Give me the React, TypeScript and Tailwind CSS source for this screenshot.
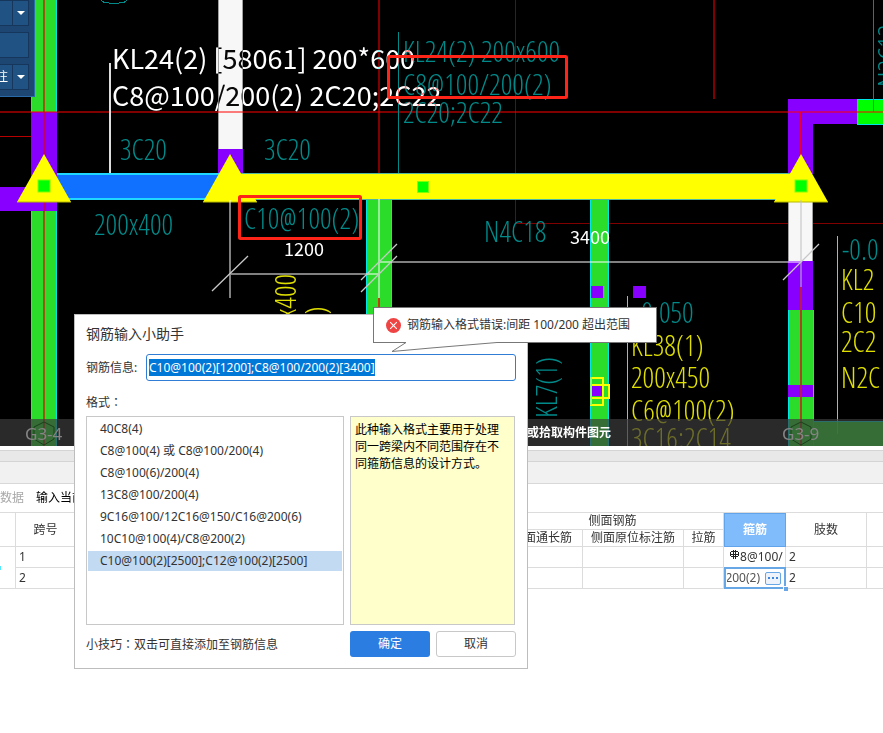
import { useEffect, useRef, useState } from "react";

const FORMATS = [
    "40C8(4)",
    "C8@100(4) 或 C8@100/200(4)",
    "C8@100(6)/200(4)",
    "13C8@100/200(4)",
    "9C16@100/12C16@150/C16@200(6)",
    "10C10@100(4)/C8@200(2)",
    "C10@100(2)[2500];C12@100(2)[2500]",
];

const TEAL = "#008a8a";
const YELLOW = "#e0e000";
const GREEN = "#2bdc2b";
const PURPLE = "#8800ff";
const CYAN = "#00e5e5";
const DARK_RED = "#800000";

// y is the baseline of each annotation
const ANNOTATIONS = [
    { text: "3C20", x: 120, y: 160, color: TEAL },
    { text: "3C20", x: 264, y: 160, color: TEAL },
    { text: "200x400", x: 94, y: 235, color: TEAL },
    { text: "C10@100(2)", x: 244, y: 229, color: TEAL },
    { text: "N4C18", x: 484, y: 242, color: TEAL },
    { text: "KL24(2) 200x600", x: 403, y: 62, color: TEAL },
    { text: "C8@100/200(2)", x: 403, y: 95, color: TEAL },
    { text: "2C20;2C22", x: 403, y: 123, color: TEAL },
    { text: "-0.050", x: 634, y: 323, color: TEAL },
    { text: "KL38(1)", x: 631, y: 356, color: YELLOW },
    { text: "200x450", x: 631, y: 388, color: YELLOW },
    { text: "C6@100(2)", x: 631, y: 421, color: YELLOW },
    { text: "3C16;2C14", x: 631, y: 449, color: YELLOW },
    { text: "-0.0", x: 842, y: 260, color: TEAL },
    { text: "KL2", x: 841, y: 290, color: YELLOW },
    { text: "C10", x: 841, y: 323, color: YELLOW },
    { text: "2C2", x: 841, y: 352, color: YELLOW },
    { text: "N2C", x: 841, y: 388, color: YELLOW },
];

const CAD_FONT = "font-['Open_Sans_Condensed_Light','Open_Sans_Condensed',sans-serif] text-[29px] font-light";

function Column({ x, y, width, height }: { x: number, y: number, width: number, height: number }) {
    return (
        <g>
            <rect x={x} y={y} width={width} height={height} fill={GREEN}/>
            <rect x={x} y={y} width={1} height={height} fill={CYAN}/>
            <rect x={x + width - 1} y={y} width={1} height={height} fill={CYAN}/>
        </g>
    );
}

function Support({ x, marker }: { x: number, marker?: boolean }) {
    return (
        <g>
            <path d={`M${x} 154L${x + 27} 202H${x - 27}Z`} fill="#ffff00"/>
            <path d={`M${x - 27} 202H${x + 27}`} stroke="#b8b800"/>
            {marker && <rect x={x - 6} y={180} width={12} height={12} fill="#00ff00" stroke="#80ff00" strokeWidth={1}/>}
        </g>
    );
}

function Drawing() {
    return (
        <svg className="block w-full h-[446px] bg-black" shapeRendering="crispEdges">
            {/* grid axes */}
            <g fill={DARK_RED}>
                <rect x={378} y={0} width={2} height={173}/>
                <rect x={515} y={0} width={1} height={223}/>
                <rect x={713} y={0} width={2} height={99}/>
                <rect x={515} y={223} width="100%" height={1}/>
            </g>
            <rect x={0} y={136} width={44} height={1} fill="#b80000"/>

            {/* columns and walls */}
            <Column x={31} y={0} width={26} height={446}/>
            <rect x={31} y={112} width={26} height={99} fill={PURPLE}/>
            <rect x={0} y={187} width={57} height={24} fill={PURPLE}/>
            <rect x={218} y={0} width={25} height={149} fill="#f7f7f7"/>
            <path d="M218.5 0V149M242.5 0V149" stroke="#a0a0a0"/>
            <rect x={218} y={149} width={25} height={25} fill={PURPLE}/>
            <path d="M788 99H857V124H813V174H788Z" fill={PURPLE}/>
            <rect x={857} y={99} width="100%" height={26} fill="#00ff00"/>
            <path d="M857 99.5H1600M857 124.5H1600" stroke={CYAN}/>
            <rect x={788} y={200} width={25} height={62} fill="#f7f7f7"/>
            <path d="M788.5 200V262M812.5 200V262" stroke="#a0a0a0"/>
            <rect x={813} y={421} width="100%" height={26} fill={GREEN}/>
            <path d="M813 421.5H1600" stroke={CYAN}/>
            <Column x={788} y={310} width={26} height={136}/>
            <rect x={788} y={261} width={25} height={49} fill={PURPLE}/>
            <rect x={788} y={385} width={25} height={12} fill={PURPLE}/>
            <Column x={366} y={199} width={26} height={247}/>
            <Column x={590} y={199} width={19} height={247}/>
            <rect x={591} y={286} width={12} height={12} fill={PURPLE}/>
            <rect x={633} y={286} width={13} height={12} fill={PURPLE}/>
            <rect x={591} y={386} width={11} height={10} fill={PURPLE}/>
            <path d="M590 377.5H603V404.5H590M590 384.5H609V397.5H590" fill="none" stroke="#ffff00" strokeWidth={2}/>
            <path d="M590.5 377V405" stroke="#80ff80" strokeWidth={2}/>

            {/* beams */}
            <rect x={57} y={173} width={165} height={26} fill="#1070ff"/>
            <path d="M57 174H222M57 199H218" stroke="#20d8ff" strokeWidth={2}/>
            <rect x={236} y={173} width={560} height={27} fill="#ffff00"/>
            <path d="M240 173.5H790M236 199.5H800" stroke="#50b8a0"/>

            <rect x={0} y={111} width="100%" height={2} fill="#ff0000" fillOpacity={0.5}/>
            <rect x={43} y={0} width={2} height={446} fill="#e00000" fillOpacity={0.6}/>
            <rect x={800} y={112} width={1} height={44} fill="#ff0000" fillOpacity={0.8}/>
            <rect x={800} y={287} width={2} height={159} fill="#c82020" fillOpacity={0.8}/>
            <rect x={378} y={298} width={2} height={30} fill="#c04010"/>

            <g shapeRendering="auto">
                <Support x={44} marker/>
                <Support x={230}/>
                <Support x={801} marker/>
            </g>
            <rect x={417} y={181} width={11} height={11} fill="#00ff00" stroke="#80ff00"/>

            {/* dimensions */}
            <g stroke="#ffffff" strokeOpacity={0.5} strokeWidth={2}>
                <path d="M230 200V298M379 199V298M230 274H379M379 262H801"/>
                <path d="M801 200V287" stroke="#c0c0c0"/>
            </g>
            <path
                d="M212 291L248 256M361 280L397 244M361 292L397 256M783 280L819 244"
                stroke="#c8c8c8" strokeWidth={1.3} shapeRendering="auto"
            />

            {/* leaders */}
            <path d="M110 63V173" stroke="#dddddd" strokeWidth={2}/>
            <path d="M398.5 32V173M873.5 0V112" stroke={TEAL}/>
            <path d="M627.5 296V446M837.5 236V434" stroke="#c8c800"/>
            <path d="M101 0Q103 3 109 3H119Q125 3 127 0" fill="none" stroke={TEAL}/>

            <g className={CAD_FONT}>
                {ANNOTATIONS.map((item, index) => (
                    <text key={index} x={item.x} y={item.y} fill={item.color}>{item.text}</text>
                ))}
                <text transform="translate(296 353) rotate(-90)" x={0} y={0} fill={YELLOW}>200x400</text>
                <text transform="translate(326 369) rotate(-90)" x={0} y={0} fill={YELLOW}>100(2)</text>
                <text transform="translate(557 418) rotate(-90)" x={0} y={0} fill={TEAL}>KL7(1)</text>
                <text transform="translate(899 87) rotate(-90)" x={0} y={0} fill={TEAL}>N2C12</text>
            </g>

            <g className="font-['Noto_Sans_CJK_SC',sans-serif]" fill="#ffffff">
                <g className="text-[27px] mix-blend-difference">
                    <text x={112} y={69}>KL24(2) [58061] 200*600</text>
                    <text x={112} y={106}>C8@100/200(2) 2C20;2C22</text>
                </g>
                <g className="text-[18px]">
                    <text x={284} y={256}>1200</text>
                    <text x={570} y={244}>3400</text>
                </g>
            </g>

            <g fill="none" stroke="#ff2418" strokeWidth={3} shapeRendering="auto">
                <rect x={388.5} y={56.5} width={178} height={41} rx={1}/>
                <rect x={239.5} y={196.5} width={121} height={42} rx={1}/>
            </g>
        </svg>
    );
}

function StatusBar() {
    return (
        <div className="absolute inset-x-0 bottom-0 h-[27px] bg-[#3c3c3c]/70">
            <svg className="block w-full h-full font-['Noto_Sans',sans-serif] text-[17px]">
                <g fill="none" stroke="#1c401c">
                    <path d="M44 3l10 5v12l-10 6l-10-6V8Z"/>
                    <path d="M801 3l10 5v12l-10 6l-10-6V8Z"/>
                </g>
                <g fill="#858585">
                    <text x={25} y={21}>G3-4</text>
                    <text x={782} y={21}>G3-9</text>
                </g>
                <text
                    x={611} y={18} textAnchor="end" fill="#ffffff"
                    className="font-['Noto_Sans_CJK_SC',sans-serif] text-[12px] font-bold"
                >
                    或拾取构件图元
                </text>
            </svg>
        </div>
    );
}

function Caret() {
    return (
        <svg width={8} height={4} viewBox="0 0 8 4"><path d="M0 0H8L4 4Z" fill="#ffffff"/></svg>
    );
}

function ToolPanel() {
    const box = "flex h-[26px] w-full border border-l-0 border-[#16365c] bg-[#205284] text-white";
    return (
        <div className="absolute left-0 top-0 flex flex-col gap-[6px] w-[35px] pr-[5px] pb-[6px] bg-[#1d4673] border-r border-b border-[#2a6aa8]">
            <button type="button" className={box}>
                <span className="w-[13px] h-full border-r border-[#16365c]"/>
                <span className="flex-1 h-full flex items-center justify-center"><Caret/></span>
            </button>
            <button type="button" className={box}/>
            <button type="button" className={box}>
                <span className="w-[13px] h-full border-r border-[#16365c] flex items-center justify-end overflow-hidden pr-[4px]">注</span>
                <span className="flex-1 h-full flex items-center justify-center"><Caret/></span>
            </button>
        </div>
    );
}

function RebarGlyph() {
    return (
        <svg className="shrink-0 mb-1" width={10} height={10} viewBox="0 0 10 10" fill="none" stroke="#222222" shapeRendering="crispEdges">
            <path d="M3.5 0V9M5.5 0V9M1 1.5H8M0.5 2V6M8.5 2V6M1 6.5H8M1 4.5H8"/>
        </svg>
    );
}

function SpanTable() {
    const cell = "border-r border-b border-[#dcdcdc] p-0 font-normal";
    return (
        <table className="w-full table-fixed border-separate border-spacing-0 text-center leading-4">
            <colgroup>
                <col className="w-[16px]"/>
                <col className="w-[60px]"/>
                <col className="w-[426px]"/>
                <col className="w-[81px]"/>
                <col className="w-[101px]"/>
                <col className="w-[40px]"/>
                <col className="w-[62px]"/>
                <col className="w-[81px]"/>
                <col/>
            </colgroup>
            <thead>
                <tr className="h-[17px]">
                    <th rowSpan={2} className={cell}/>
                    <th rowSpan={2} className={cell}>跨号</th>
                    <th rowSpan={2} className={cell}/>
                    <th colSpan={3} className={cell}>侧面钢筋</th>
                    <th rowSpan={2} className="p-0 bg-[#80bbfb] border border-[#62a4ea] font-bold text-white">箍筋</th>
                    <th rowSpan={2} className={cell}>肢数</th>
                    <th rowSpan={2} className="border-b border-[#dcdcdc] p-0"/>
                </tr>
                <tr className="h-[17px]">
                    <th className={cell}><span className="flex justify-center whitespace-nowrap">侧面通长筋</span></th>
                    <th className={cell}>侧面原位标注筋</th>
                    <th className={cell}>拉筋</th>
                </tr>
            </thead>
            <tbody>
                <tr className="h-[21px]">
                    <td rowSpan={2} className={cell}><span className="block w-px h-1 bg-cyan-300"/></td>
                    <td className={`${cell} text-left pl-[3px]`}>1</td>
                    <td className={cell}/>
                    <td className={cell}/>
                    <td className={cell}/>
                    <td className={cell}/>
                    <td className={cell}>
                        <div className="flex items-center overflow-hidden pl-[6px]"><RebarGlyph/>8@100/</div>
                    </td>
                    <td className={`${cell} text-left pl-[3px]`}>2</td>
                    <td className="border-b border-[#dcdcdc] p-0"/>
                </tr>
                <tr className="h-[21px]">
                    <td className={`${cell} text-left pl-[3px]`}>2</td>
                    <td className={cell}/>
                    <td className={cell}/>
                    <td className={cell}/>
                    <td className={cell}/>
                    <td className={`${cell} relative`}>
                        <div className="absolute -inset-y-px left-0 -right-px flex items-center gap-[5px] border-2 border-[#68a7e6] bg-white pl-[1px] pr-[3px]">
                            <span className="flex-1 min-w-0 flex justify-end overflow-hidden whitespace-nowrap text-[#555555]">200(2)</span>
                            <button type="button" className="flex items-center justify-center gap-[2px] w-4 h-[13px] rounded-[2px] border border-[#68a7e6] bg-[#eef2fb]">
                                <span className="size-[2px] bg-[#3c86e0]"/>
                                <span className="size-[2px] bg-[#3c86e0]"/>
                                <span className="size-[2px] bg-[#3c86e0]"/>
                            </button>
                        </div>
                        <span className="absolute -right-[3px] -bottom-[3px] size-[5px] border-t border-l border-white bg-[#68a7e6]"/>
                    </td>
                    <td className={`${cell} text-left pl-[3px]`}>2</td>
                    <td className="border-b border-[#dcdcdc] p-0"/>
                </tr>
            </tbody>
        </table>
    );
}

function ErrorTip() {
    return (
        <div role="alert" className="absolute left-[373px] top-[307px] flex items-center gap-[6px] w-[284px] h-[36px] pl-[12px] border border-[#777777] bg-white whitespace-nowrap">
            <svg width={15} height={15} viewBox="0 0 15 15">
                <circle cx={7.5} cy={7.5} r={7.5} fill="#ee4444"/>
                <path d="M4.2 4.2L10.8 10.8M10.8 4.2L4.2 10.8" stroke="#ffffff" strokeWidth={1.1}/>
            </svg>
            <span>钢筋输入格式错误:间距 100/200 超出范围</span>
            <svg className="absolute left-[17px] top-[33px]" width={110} height={12} viewBox="0 0 110 12">
                <path d="M15 0V2L1 10L106 2V0Z" fill="#ffffff"/>
                <path d="M15 1.5L1 10.5L40 7L106 1.5" fill="none" stroke="#777777"/>
            </svg>
        </div>
    );
}

function Colon() {
    return <span className="font-['Noto_Sans_CJK_TC',sans-serif]">：</span>;
}

function HelperDialog() {
    const [value, setValue] = useState("C10@100(2)[1200];C8@100/200(2)[3400]");
    const [selected, setSelected] = useState(6);
    const inputRef = useRef<HTMLInputElement>(null);

    useEffect(() => {
        inputRef.current?.focus();
        inputRef.current?.select();
    }, []);

    return (
        <div role="dialog" aria-labelledby="helper-title" className="absolute left-[74px] top-[314px] w-[454px] px-[11px] pt-[9px] pb-[11px] border border-[#bdbdbd] bg-white">
            <h2 id="helper-title" className="text-[14px] leading-5">钢筋输入小助手</h2>
            <div className="flex items-center justify-between mt-[10px]">
                <label htmlFor="rebar">钢筋信息:</label>
                <div className="w-[370px] px-[2px] py-1 border border-[#2f7dd4] rounded-[3px]">
                    <input
                        id="rebar"
                        ref={inputRef}
                        value={value}
                        onChange={(event) => setValue(event.target.value)}
                        className="block w-full h-[17px] leading-[17px] outline-none selection:bg-[#0078d7] selection:text-white"
                    />
                </div>
            </div>
            <p className="mt-3 h-[17px] leading-[17px]">格式<Colon/></p>
            <div className="flex justify-between mt-[6px] h-[209px]">
                <ul className="w-[258px] border border-[#c8c8c8] px-px py-[2px] flex flex-col gap-[2px]">
                    {FORMATS.map((format, index) => (
                        <li key={format}>
                            <button
                                type="button"
                                onClick={() => setSelected(index)}
                                className={`block w-full h-5 pl-3 text-left ${index === selected ? "bg-[#c2daf2]" : ""}`}
                            >
                                {format}
                            </button>
                        </li>
                    ))}
                </ul>
                <p className="w-[165px] mr-px border border-[#c8c8c8] bg-[#ffffcc] px-1 py-1 leading-[17px] text-black">
                    此种输入格式主要用于处理同一跨梁内不同范围存在不同箍筋信息的设计方式。
                </p>
            </div>
            <div className="flex items-center gap-[6px] mt-[6px]">
                <span className="flex-1">小技巧<Colon/>双击可直接添加至钢筋信息</span>
                <button type="button" className="w-20 h-[26px] rounded-[3px] bg-[#2b7de1] text-white">确定</button>
                <button type="button" className="w-20 h-[26px] rounded-[3px] border border-[#c8c8c8] bg-white">取消</button>
            </div>
        </div>
    );
}

function App() {
    return (
        <div className="relative min-h-screen overflow-hidden bg-white text-[12px] text-[#333333] font-['Noto_Sans','Noto_Sans_CJK_SC',sans-serif]">
            <div className="relative">
                <Drawing/>
                <StatusBar/>
                <ToolPanel/>
            </div>
            <div className="mt-1 h-[12px] border-y border-[#d4d4d4] bg-[#e8e8e8]"/>
            <div className="h-[22px] border-b border-[#d8d8d8] bg-[#f1f1f1]"/>
            <div className="flex items-center gap-3 h-[29px] border-b border-[#dcdcdc]">
                <button type="button" className="text-[#a8a8a8]">数据</button>
                <button type="button" className="text-black">输入当前</button>
            </div>
            <SpanTable/>
            <HelperDialog/>
            <ErrorTip/>
        </div>
    );
}

export default App;
